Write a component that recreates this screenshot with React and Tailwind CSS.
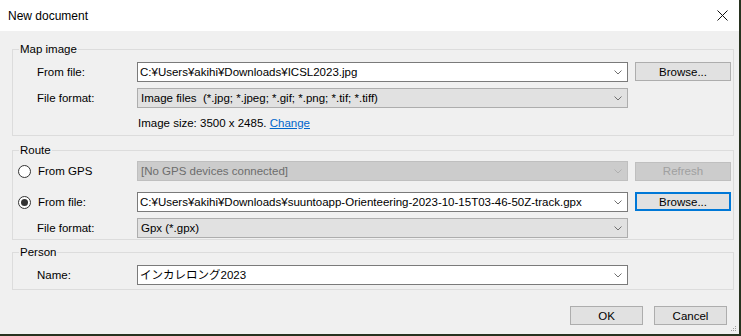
const font = "font-['Liberation_Sans','Noto_Sans_CJK_JP',sans-serif]";

function Chevron({ disabled }) {
  return (
    <svg width="8" height="5" viewBox="0 0 8 5" className="shrink-0">
      <path
        d="M0.5 0.5 L4 4 L7.5 0.5"
        fill="none"
        stroke={disabled ? "#b0b0b0" : "#707070"}
        strokeWidth="1"
      />
    </svg>
  );
}

function Combo({ value, variant = "edit" }) {
  const styles = {
    edit: "bg-white border-[#7a7a7a] text-black pl-[2px]",
    list: "bg-[#e1e1e1] border-[#adadad] text-black pl-[3px]",
    disabled: "bg-[#cccccc] border-[#bfbfbf] text-[#6d6d6d] pl-[3px]",
  };
  return (
    <div
      className={`flex h-[20px] w-[491px] shrink-0 items-center justify-between border pr-[5px] ${styles[variant]}`}
    >
      <span className="whitespace-pre leading-[16px]">{value}</span>
      <Chevron disabled={variant === "disabled"} />
    </div>
  );
}

function Button({ children, focused, disabled, className = "" }) {
  let look = "border border-[#adadad] bg-[#e1e1e1] text-black";
  if (focused) look = "border-2 border-[#0078d7] bg-[#e1e1e1] text-black";
  if (disabled) look = "border border-[#bfbfbf] bg-[#cccccc] text-[#a0a0a0]";
  return (
    <div
      className={`flex h-[19px] items-center justify-center leading-[14px] ${look} ${className}`}
    >
      {children}
    </div>
  );
}

function Radio({ checked }) {
  return (
    <div className="flex h-[13px] w-[13px] shrink-0 items-center justify-center rounded-full border border-[#333333] bg-white">
      {checked && <div className="h-[7px] w-[7px] rounded-full bg-[#333333]" />}
    </div>
  );
}

function Group({ title, className = "", children }) {
  return (
    <fieldset className={`ml-[12px] w-[722px] border border-[#dcdcdc] ${className}`}>
      <legend className="ml-[6px] px-[1px] leading-[14px]">{title}</legend>
      {children}
    </fieldset>
  );
}

function Label({ children }) {
  return <div className="w-[100px] shrink-0 leading-[14px]">{children}</div>;
}

export default function App() {
  return (
    <div className={`flex h-[336px] w-[741px] bg-[#27321f] text-[11.5px] text-black ${font}`}>
      <div className="relative flex h-[334px] w-[739px] flex-col bg-[#f0f0f0]">
        {/* Title bar */}
        <div className="flex h-[31px] shrink-0 items-center justify-between bg-white pl-[8px] pr-[11px]">
          <span className="text-[12px] leading-[14px]">New document</span>
          <svg width="11" height="11" viewBox="0 0 11 11">
            <path d="M0.5 0.5 L10.5 10.5 M10.5 0.5 L0.5 10.5" stroke="#111" strokeWidth="1" />
          </svg>
        </div>

        {/* Map image */}
        <Group title="Map image" className="mt-[11px]">
          <div className="pb-[5px] pl-[24px] pt-[6px]">
            <div className="flex items-center">
              <Label>From file:</Label>
              <Combo value="C:¥Users¥akihi¥Downloads¥ICSL2023.jpg" />
              <Button className="-mt-px ml-[7px] w-[96px]">Browse...</Button>
            </div>
            <div className="mt-[6px] flex items-center">
              <Label>File format:</Label>
              <Combo
                variant="list"
                value="Image files  (*.jpg; *.jpeg; *.gif; *.png; *.tif; *.tiff)"
              />
            </div>
            <div className="mt-[8px] flex h-[14px] items-center pl-[101px] leading-[14px]">
              <span className="whitespace-pre">Image size: 3500 x 2485. </span>
              <span className="text-[#0066cc] underline">Change</span>
            </div>
          </div>
        </Group>

        {/* Route */}
        <Group title="Route" className="mt-[7px]">
          <div className="pb-[1px] pl-[24px] pt-[4px]">
            <div className="flex items-center">
              <div className="-ml-[19px] flex w-[119px] shrink-0 items-center gap-[7px] leading-[14px]">
                <Radio />
                <span>From GPS</span>
              </div>
              <Combo variant="disabled" value="[No GPS devices connected]" />
              <Button disabled className="ml-[7px] w-[96px]">
                Refresh
              </Button>
            </div>
            <div className="mt-[11px] flex items-center">
              <div className="-ml-[19px] flex w-[119px] shrink-0 items-center gap-[7px] leading-[14px]">
                <Radio checked />
                <span>From file:</span>
              </div>
              <Combo value="C:¥Users¥akihi¥Downloads¥suuntoapp-Orienteering-2023-10-15T03-46-50Z-track.gpx" />
              <Button focused className="-mt-px ml-[7px] w-[96px]">
                Browse...
              </Button>
            </div>
            <div className="mt-[6px] flex items-center">
              <Label>File format:</Label>
              <Combo variant="list" value="Gpx (*.gpx)" />
            </div>
          </div>
        </Group>

        {/* Person */}
        <Group title="Person" className="mt-[5px]">
          <div className="pb-[4px] pl-[24px] pt-[6px]">
            <div className="flex items-center">
              <Label>Name:</Label>
              <Combo value="インカレロング2023" />
            </div>
          </div>
        </Group>

        {/* Footer buttons */}
        <div className="mt-[16px] flex justify-end gap-[11px] pr-[12px]">
          <Button className="w-[73px]">OK</Button>
          <Button className="w-[73px]">Cancel</Button>
        </div>

        {/* Resize grip */}
        <svg
          width="6"
          height="6"
          viewBox="0 0 6 6"
          className="absolute bottom-[2px] right-[2px]"
        >
          <rect x="4" y="0" width="1" height="1" fill="#a0a0a0" />
          <rect x="2" y="2" width="1" height="1" fill="#a0a0a0" />
          <rect x="4" y="2" width="1" height="1" fill="#a0a0a0" />
          <rect x="0" y="4" width="1" height="1" fill="#a0a0a0" />
          <rect x="2" y="4" width="1" height="1" fill="#a0a0a0" />
          <rect x="4" y="4" width="1" height="1" fill="#a0a0a0" />
        </svg>
      </div>
    </div>
  );
}
